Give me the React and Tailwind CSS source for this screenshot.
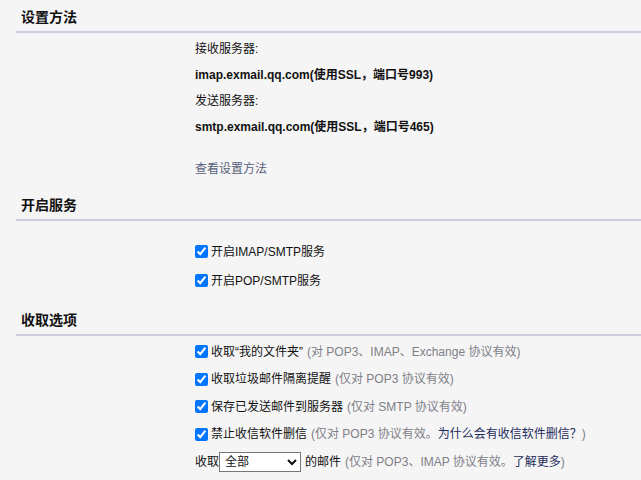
const font = { fontFamily: '"Liberation Sans", "Noto Sans CJK SC", sans-serif' };

function SectionTitle({ children }) {
  return (
    <div className="ml-[16px] border-b-2 border-[#cacedd] pl-[5px] pt-[9px] pb-[6px] text-[14px] leading-[16px] font-bold text-[#111]">
      {children}
    </div>
  );
}

function Check({ label, note, link, tail }) {
  return (
    <label className="flex h-[27.5px] items-center text-[12px]">
      <input type="checkbox" defaultChecked className="m-0 mr-[3px] h-[13px] w-[13px] accent-[#0075ff]" />
      <span className="text-[#111]">{label}</span>
      {note && (
        <span className="ml-[4px] text-[#7f8088]">
          {note}
          {link && <a className="text-[#1f2c5c]">{link}</a>}
          {tail}
        </span>
      )}
    </label>
  );
}

export default function App() {
  return (
    <div className="min-h-[480px] w-[641px] overflow-hidden bg-[#f5f5f5]" style={font}>
      <SectionTitle>设置方法</SectionTitle>
      <div className="pl-[195px] pt-[3px] text-[12px] text-[#111]">
        <div className="h-[26px] leading-[26px]">接收服务器:</div>
        <div className="h-[26px] leading-[26px] font-bold">imap.exmail.qq.com(使用SSL，端口号993)</div>
        <div className="h-[26px] leading-[26px]">发送服务器:</div>
        <div className="h-[26px] leading-[26px] font-bold">smtp.exmail.qq.com(使用SSL，端口号465)</div>
        <div className="mt-[16px] h-[26px] leading-[26px] text-[#56607a]">查看设置方法</div>
      </div>

      <div className="mt-[6px]">
        <SectionTitle>开启服务</SectionTitle>
        <div className="pl-[195px] pt-[16px] text-[12px]">
          <label className="flex h-[29px] items-center">
            <input type="checkbox" defaultChecked className="m-0 mr-[3px] h-[13px] w-[13px] accent-[#0075ff]" />
            <span className="text-[#111]">开启IMAP/SMTP服务</span>
          </label>
          <label className="flex h-[29px] items-center">
            <input type="checkbox" defaultChecked className="m-0 mr-[3px] h-[13px] w-[13px] accent-[#0075ff]" />
            <span className="text-[#111]">开启POP/SMTP服务</span>
          </label>
        </div>
      </div>

      <div className="mt-[8px]">
        <SectionTitle>收取选项</SectionTitle>
        <div className="pl-[195px] pt-[2px]">
          <Check label="收取“我的文件夹”" note="(对 POP3、IMAP、Exchange 协议有效)" />
          <Check label="收取垃圾邮件隔离提醒" note="(仅对 POP3 协议有效)" />
          <Check label="保存已发送邮件到服务器" note="(仅对 SMTP 协议有效)" />
          <Check label="禁止收信软件删信" note="(仅对 POP3 协议有效。" link="为什么会有收信软件删信？" tail=")" />
          <div className="flex h-[27.5px] items-center text-[12px]">
            <span className="text-[#111]">收取</span>
            <select
              defaultValue="all"
              className="ml-0 mr-[4px] h-[20px] w-[82px] border border-[#767676] bg-white pl-[1px] text-[12px] text-[#111]"
              style={font}
            >
              <option value="all">全部</option>
              <option value="30">最近30天</option>
            </select>
            <span className="text-[#111]">的邮件</span>
            <span className="ml-[4px] text-[#7f8088]">
              (仅对 POP3、IMAP 协议有效。<a className="text-[#1f2c5c]">了解更多</a>)
            </span>
          </div>
        </div>
      </div>
    </div>
  );
}
